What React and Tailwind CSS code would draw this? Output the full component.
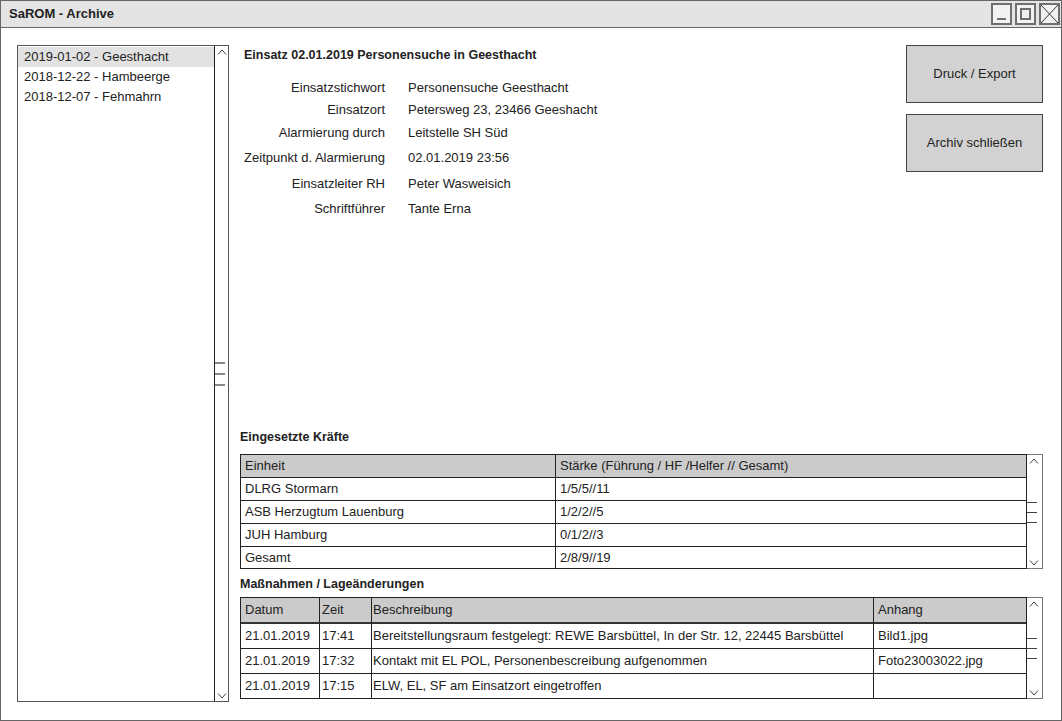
import React from 'react'

const ARCHIVE = [
  { label: '2019-01-02 - Geesthacht', selected: true },
  { label: '2018-12-22 - Hambeerge' },
  { label: '2018-12-07 - Fehmahrn' },
]

const DETAILS = [
  { label: 'Einsatzstichwort', value: 'Personensuche Geesthacht', h: 'h-[22px]' },
  { label: 'Einsatzort', value: 'Petersweg 23, 23466 Geeshacht', h: 'h-[22px]' },
  { label: 'Alarmierung durch', value: 'Leitstelle SH Süd', h: 'h-[24px]' },
  { label: 'Zeitpunkt d. Alarmierung', value: '02.01.2019 23:56', h: 'h-[26px]' },
  { label: 'Einsatzleiter RH', value: 'Peter Wasweisich', h: 'h-[26px]' },
  { label: 'Schriftführer', value: 'Tante Erna', h: 'h-[24px]' },
]

const FORCES = [
  ['DLRG Stormarn', '1/5/5//11'],
  ['ASB Herzugtum Lauenburg', '1/2/2//5'],
  ['JUH Hamburg', '0/1/2//3'],
  ['Gesamt', '2/8/9//19'],
]

const MEASURES = [
  ['21.01.2019', '17:41', 'Bereitstellungsraum festgelegt: REWE Barsbüttel, In der Str. 12, 22445 Barsbüttel', 'Bild1.jpg'],
  ['21.01.2019', '17:32', 'Kontakt mit EL POL, Personenbescreibung aufgenommen', 'Foto23003022.jpg'],
  ['21.01.2019', '17:15', 'ELW, EL, SF am Einsatzort eingetroffen', ''],
]

function Chevron({ down = false }) {
  return (
    <svg width="10" height="6" viewBox="0 0 10 6" className="text-[#444] shrink-0">
      <polyline
        points={down ? '1,0.5 5,5 9,0.5' : '1,5.5 5,1 9,5.5'}
        fill="none"
        stroke="currentColor"
        strokeWidth="1"
      />
    </svg>
  )
}

function ScrollBar({ className = '', mark = 'h-px bg-[#444]' }) {
  return (
    <div className={`flex flex-col items-start justify-between bg-white pt-[3px] pb-[2px] ${className}`}>
      <div className="pl-[2px]"><Chevron /></div>
      <div className="flex flex-col gap-[9px] w-full">
        <div className={`w-[10px] ${mark}`} />
        <div className={`w-[10px] ${mark}`} />
        <div className={`w-[10px] ${mark}`} />
      </div>
      <div className="pl-[2px]"><Chevron down /></div>
    </div>
  )
}

function WindowButton({ children }) {
  return (
    <div className="w-[21px] h-[22px] border-2 border-[#6f6f6f] relative overflow-hidden bg-[#f2f2f2]">
      {children}
    </div>
  )
}

export default function App() {
  return (
    <div className="w-[1062px] h-[721px] bg-white border border-[#666] flex flex-col text-[#222] font-['Liberation_Sans',Arial,sans-serif]">
      {/* Title bar */}
      <div className="h-[27px] shrink-0 bg-[#e4e4e4] border-b border-[#666] flex items-center justify-between pl-[8px] pr-[1px]">
        <span className="text-[13px] font-bold">SaROM - Archive</span>
        <div className="flex gap-[3px] items-center">
          <WindowButton>
            <div className="absolute left-[4px] right-[4px] bottom-[3px] h-[2px] bg-[#6f6f6f]" />
          </WindowButton>
          <WindowButton>
            <div className="absolute left-[3px] top-[3px] w-[11px] h-[12px] border-2 border-[#6f6f6f]" />
          </WindowButton>
          <WindowButton>
            <svg className="absolute inset-0" width="17" height="18" viewBox="0 0 17 18">
              <line x1="0" y1="0" x2="17" y2="18" stroke="#333" strokeWidth="1" />
              <line x1="17" y1="0" x2="0" y2="18" stroke="#333" strokeWidth="1" />
            </svg>
          </WindowButton>
        </div>
      </div>

      {/* Body */}
      <div className="flex-1 flex pt-[17px] pl-[16px]">
        {/* Archive list */}
        <div className="w-[212px] h-[657px] border border-[#555] flex">
          <div className="flex-1 pt-[1px] pl-[0px]">
            {ARCHIVE.map(item => (
              <div
                key={item.label}
                className={`h-[20px] leading-[20px] pl-[6px] text-[13px] ${item.selected ? 'bg-[#e2e2e2]' : ''}`}
              >
                {item.label}
              </div>
            ))}
          </div>
          <ScrollBar className="w-[14px] border-l border-[#222]" mark="h-[2px] bg-[#888]" />
        </div>

        {/* Main */}
        <div className="ml-[11px] w-[803px] h-[657px] flex flex-col">
          <div className="flex">
            <div className="pl-[4px] flex-1">
              <div className="h-[20px] leading-[20px] text-[12.5px] font-bold">
                Einsatz 02.01.2019 Personensuche in Geesthacht
              </div>
              <div className="mt-[12px]">
                {DETAILS.map(row => (
                  <div key={row.label} className={`flex items-center text-[13px] ${row.h}`}>
                    <span className="w-[141px] text-right">{row.label}</span>
                    <span className="ml-[23px]">{row.value}</span>
                  </div>
                ))}
              </div>
            </div>
            <div className="w-[137px] flex flex-col gap-[11px]">
              <button className="h-[58px] bg-[#d2d2d2] border border-[#444] text-[13px] text-[#222]">
                Druck / Export
              </button>
              <button className="h-[58px] bg-[#d2d2d2] border border-[#444] text-[13px] text-[#222]">
                Archiv schließen
              </button>
            </div>
          </div>

          {/* Eingesetzte Kräfte */}
          <div className="mt-auto h-[20px] leading-[20px] text-[12.5px] font-bold">Eingesetzte Kräfte</div>
          <div className="mt-[7px] flex h-[115px]">
            <div className="flex-1 border border-[#222] flex flex-col text-[13px]">
              <div className="h-[23px] shrink-0 flex bg-[#cbcbcb] border-b border-[#222]">
                <div className="w-[315px] border-r border-[#222] pl-[4px] flex items-center">Einheit</div>
                <div className="flex-1 pl-[4px] flex items-center">Stärke (Führung / HF /Helfer // Gesamt)</div>
              </div>
              {FORCES.map((r, i) => (
                <div
                  key={r[0]}
                  className={`flex ${i < FORCES.length - 1 ? 'h-[23px] border-b border-[#222]' : 'flex-1'}`}
                >
                  <div className="w-[315px] border-r border-[#222] pl-[4px] flex items-center">{r[0]}</div>
                  <div className="flex-1 pl-[4px] flex items-center">{r[1]}</div>
                </div>
              ))}
            </div>
            <ScrollBar className="w-[16px] border-y border-r border-[#777]" />
          </div>

          {/* Maßnahmen */}
          <div className="mt-[5px] h-[20px] leading-[20px] text-[12.5px] font-bold">Maßnahmen / Lageänderungen</div>
          <div className="mt-[3px] mb-[3px] flex h-[102px]">
            <div className="flex-1 border border-[#222] flex flex-col text-[13px]">
              <div className="h-[26px] shrink-0 flex bg-[#cbcbcb] border-b-2 border-[#333]">
                <div className="w-[79px] border-r border-[#222] pl-[4px] flex items-center">Datum</div>
                <div className="w-[52px] border-r border-[#222] pl-[2px] flex items-center">Zeit</div>
                <div className="w-[502px] border-r border-[#222] pl-[1px] flex items-center">Beschreibung</div>
                <div className="flex-1 pl-[4px] flex items-center">Anhang</div>
              </div>
              {MEASURES.map((r, i) => (
                <div
                  key={r[1]}
                  className={`flex ${i < MEASURES.length - 1 ? 'h-[25px] border-b border-[#222]' : 'flex-1'}`}
                >
                  <div className="w-[79px] border-r border-[#222] pl-[4px] flex items-center">{r[0]}</div>
                  <div className="w-[52px] border-r border-[#222] pl-[2px] flex items-center">{r[1]}</div>
                  <div className="w-[502px] border-r border-[#222] pl-[1px] flex items-center whitespace-nowrap overflow-hidden">{r[2]}</div>
                  <div className="flex-1 pl-[4px] flex items-center">{r[3]}</div>
                </div>
              ))}
            </div>
            <ScrollBar className="w-[16px] border-y border-r border-[#777]" />
          </div>
        </div>
      </div>
    </div>
  )
}
